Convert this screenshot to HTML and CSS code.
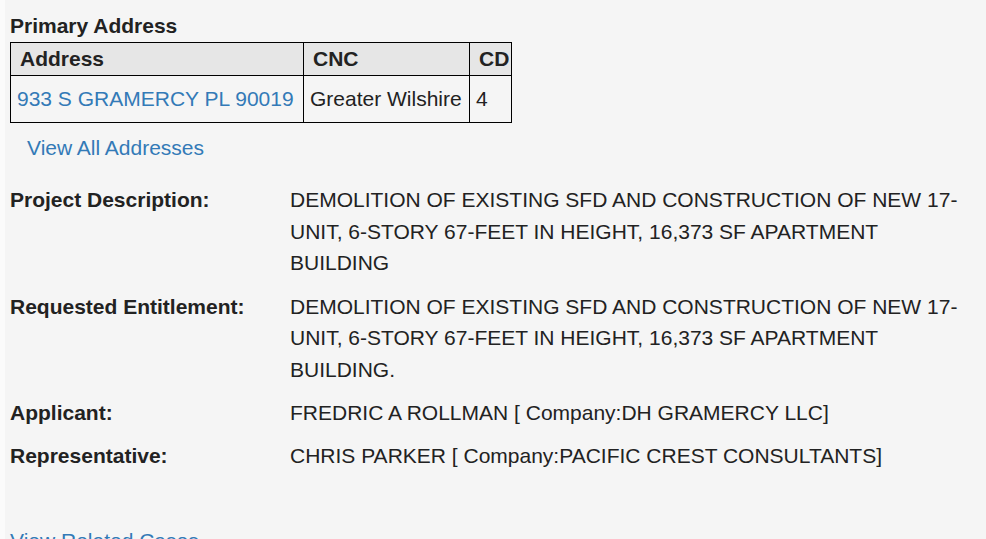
FILE: index.html
```html
<!DOCTYPE html>
<html>
<head>
<meta charset="utf-8">
<link rel="stylesheet" href="styles.css">
</head>
<body>
<div class="panel">
  <h3 class="heading">Primary Address</h3>
  <table class="addr">
    <thead>
      <tr><th class="c1">Address</th><th class="c2">CNC</th><th class="c3">CD</th></tr>
    </thead>
    <tbody>
      <tr><td><a href="#">933 S GRAMERCY PL 90019</a></td><td>Greater Wilshire</td><td>4</td></tr>
    </tbody>
  </table>
  <div class="all"><a href="#">View All Addresses</a></div>
  <div class="details">
    <div class="row"><div class="label">Project Description:</div><div class="value">DEMOLITION OF EXISTING SFD AND CONSTRUCTION OF NEW 17-UNIT, 6-STORY 67-FEET IN HEIGHT, 16,373 SF APARTMENT BUILDING</div></div>
    <div class="row"><div class="label">Requested Entitlement:</div><div class="value">DEMOLITION OF EXISTING SFD AND CONSTRUCTION OF NEW 17-UNIT, 6-STORY 67-FEET IN HEIGHT, 16,373 SF APARTMENT BUILDING.</div></div>
    <div class="row short"><div class="label">Applicant:</div><div class="value">FREDRIC A ROLLMAN [ Company:DH GRAMERCY LLC]</div></div>
    <div class="row last"><div class="label">Representative:</div><div class="value">CHRIS PARKER [ Company:PACIFIC CREST CONSULTANTS]</div></div>
  </div>
  <div class="related"><a href="#">View Related Cases</a></div>
</div>
</body>
</html>
```
FILE: styles.css
```css
html, body {
  margin: 0;
  padding: 0;
  background: #fbfbfb;
}
body {
  font-family: "Liberation Sans", Arial, Helvetica, sans-serif;
  font-size: 21px;
  color: #222;
  overflow: hidden;
}
a {
  color: #337ab7;
  text-decoration: none;
}
.panel {
  margin-left: 5px;
  background: #f5f5f5;
  padding: 11px 16px 0 5px;
  min-height: 560px;
  box-sizing: border-box;
}
.heading {
  margin: 0 0 1px 0;
  font-size: 21px;
  font-weight: bold;
  line-height: 30px;
}
.addr {
  border-collapse: separate;
  border-spacing: 0;
  table-layout: fixed;
  width: 502px;
  border-left: 1px solid #000;
  border-top: 1px solid #000;
}
.addr th, .addr td {
  box-sizing: border-box;
  border-right: 1px solid #000;
  border-bottom: 1px solid #000;
  text-align: left;
  line-height: 30px;
  white-space: nowrap;
  overflow: visible;
}
.addr th {
  background: #e6e6e6;
  font-weight: bold;
  padding: 1px 0 1px 9px;
}
.addr td {
  padding: 8px 6px;
}
.c1 { width: 293px; }
.c2 { width: 166px; }
.c3 { width: 42px; }
.all {
  margin-top: 10px;
  padding-left: 17px;
  line-height: 30px;
}
.details {
  margin-top: 21px;
}
.row {
  display: grid;
  grid-template-columns: 280px 1fr;
  line-height: 31.5px;
  margin-bottom: 12px;
}
.row.short {
  margin-bottom: 11px;
}
.row.last {
  margin-bottom: 0;
}
.label {
  font-weight: bold;
}
.related {
  margin-top: 55px;
  line-height: 30px;
}
```
